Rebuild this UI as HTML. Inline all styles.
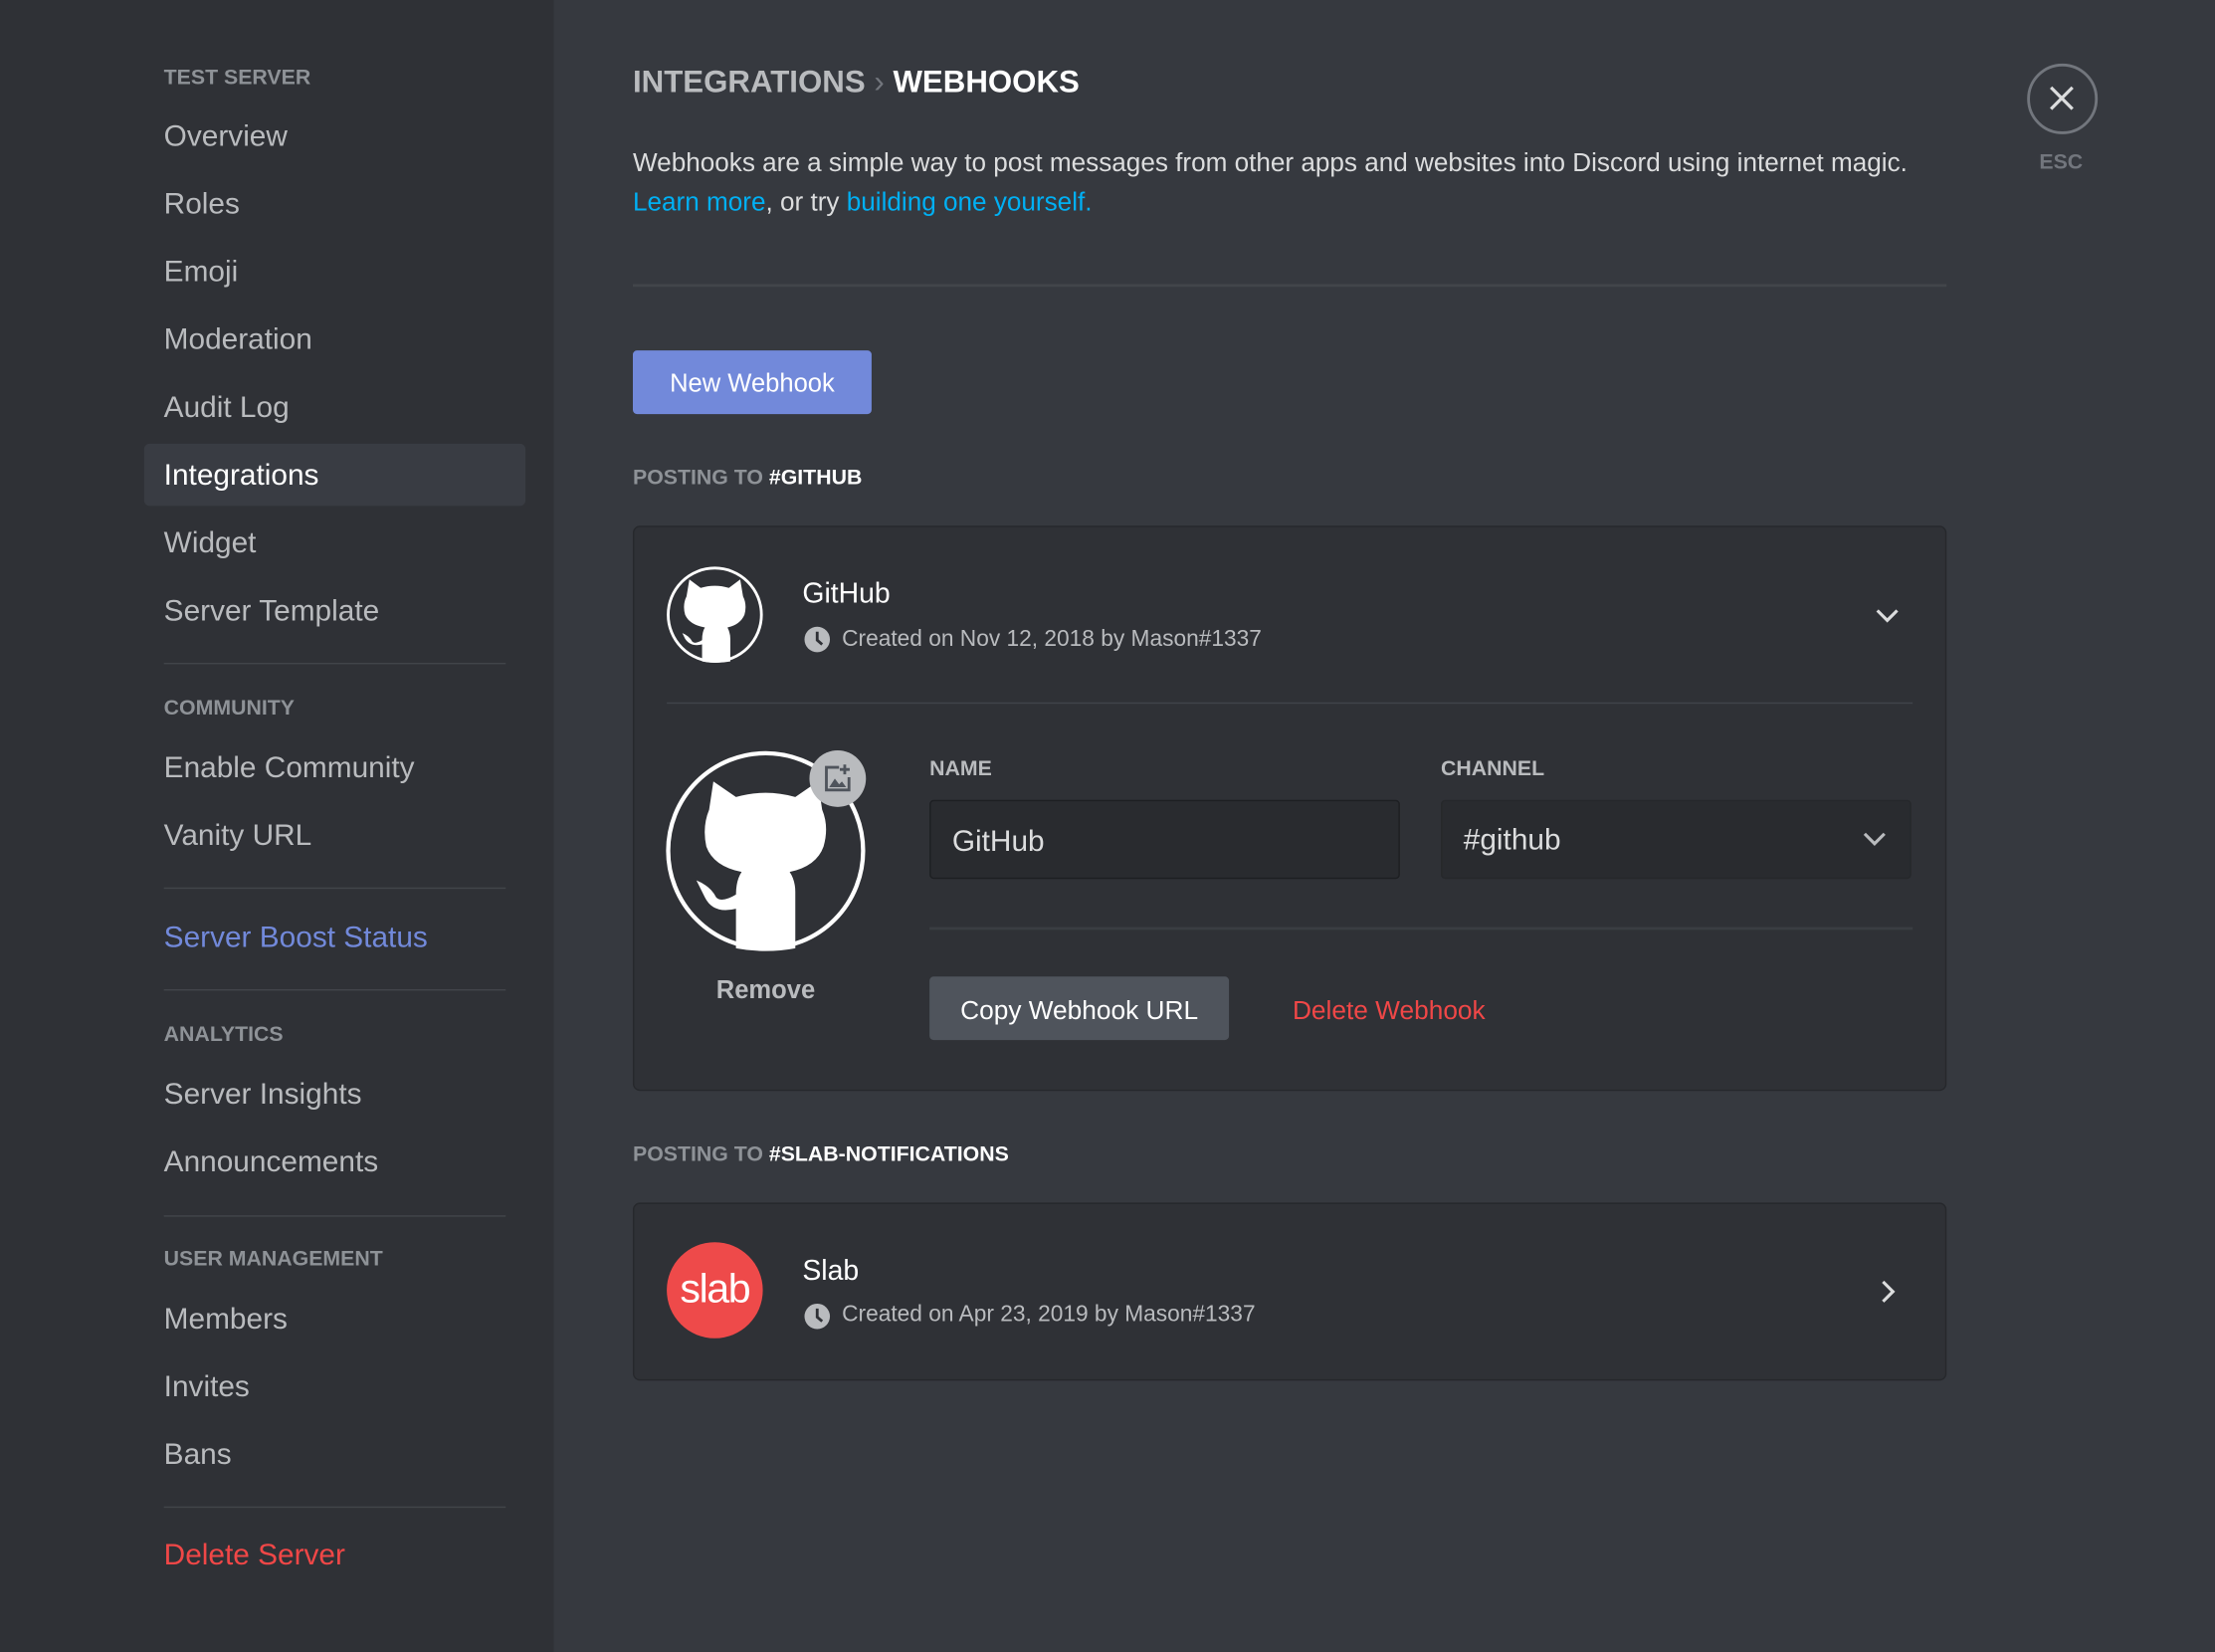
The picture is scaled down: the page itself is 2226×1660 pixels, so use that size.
<!DOCTYPE html>
<html><head><meta charset="utf-8"><style>
html,body{margin:0;padding:0;width:2226px;height:1660px;overflow:hidden;background:#36393f}
#w{position:absolute;left:0;top:0;width:1568px;height:1169px;transform:scale(1.41964,1.42001);transform-origin:0 0;font-family:"Liberation Sans",sans-serif;background:#36393f}
.a{position:absolute;white-space:nowrap}
#side{position:absolute;left:0;top:0;width:392px;height:1169px;background:#2f3136}
.h{font-size:15px;font-weight:bold;color:#8e9297;left:116px;transform:translateY(-50%);margin-top:1px}
.i{font-size:21px;color:#b9bbbe;left:116px;transform:translateY(-50%);margin-top:1px}
.sep{position:absolute;left:116px;width:242px;height:1px;background:#42454a}
.lbl{font-size:15px;font-weight:bold;color:#b9bbbe;transform:translateY(-50%);margin-top:1px}
.card{position:absolute;left:448px;width:928px;background:#2f3136;border:1px solid #26282c;border-radius:5px}
.meta{font-size:16px;color:#b9bbbe;transform:translateY(-50%);margin-top:1px}
</style></head><body><div id="w">
<div id="side">
<div class="a h" style="top:54px">TEST SERVER</div>
<div class="a i" style="top:96px">Overview</div>
<div class="a i" style="top:144px">Roles</div>
<div class="a i" style="top:192px">Emoji</div>
<div class="a i" style="top:240px">Moderation</div>
<div class="a i" style="top:288px">Audit Log</div>
<div style="position:absolute;left:102px;top:314px;width:270px;height:44px;background:#393c43;border-radius:4px"></div>
<div class="a i" style="top:336px;color:#fff">Integrations</div>
<div class="a i" style="top:384px">Widget</div>
<div class="a i" style="top:432px">Server Template</div>
<div class="sep" style="top:469px"></div>
<div class="a h" style="top:500px">COMMUNITY</div>
<div class="a i" style="top:543px">Enable Community</div>
<div class="a i" style="top:591px">Vanity URL</div>
<div class="sep" style="top:628px"></div>
<div class="a i" style="top:663px;color:#7289da">Server Boost Status</div>
<div class="sep" style="top:700px"></div>
<div class="a h" style="top:731px">ANALYTICS</div>
<div class="a i" style="top:774px">Server Insights</div>
<div class="a i" style="top:822px">Announcements</div>
<div class="sep" style="top:860px"></div>
<div class="a h" style="top:890px">USER MANAGEMENT</div>
<div class="a i" style="top:933px">Members</div>
<div class="a i" style="top:981px">Invites</div>
<div class="a i" style="top:1029px">Bans</div>
<div class="sep" style="top:1066px"></div>
<div class="a i" style="top:1100px;color:#f04747">Delete Server</div>
</div>

<div class="a" style="left:448px;top:58px;transform:translateY(-50%);font-size:22px;font-weight:bold;color:#b9bbbe">INTEGRATIONS <span style="color:#72767d;font-weight:normal">›</span> <span style="color:#fff">WEBHOOKS</span></div>
<div class="a" style="left:448px;top:115px;transform:translateY(-50%);font-size:18.4px;color:#dcddde">Webhooks are a simple way to post messages from other apps and websites into Discord using internet magic.</div>
<div class="a" style="left:448px;top:143px;transform:translateY(-50%);font-size:18.4px;color:#dcddde"><span style="color:#00b0f4">Learn more</span>, or try <span style="color:#00b0f4">building one yourself.</span></div>
<div style="position:absolute;left:448px;top:201px;width:930px;height:2px;background:#42454a"></div>
<div style="position:absolute;left:448px;top:248px;width:169px;height:45px;background:#7289da;border-radius:3px;color:#fff;font-size:18px;line-height:47px;text-align:center">New Webhook</div>
<div class="a lbl" style="left:448px;top:337px;color:#8e9297">POSTING TO <span style="color:#fff">#GITHUB</span></div>

<div style="position:absolute;left:1435px;top:45px;width:46px;height:46px;border:2px solid #72767d;border-radius:50%"></div>
<svg class="a" style="left:1450px;top:60px" width="19" height="19" viewBox="0 0 20 20"><path d="M2 2L18 18M18 2L2 18" stroke="#dcddde" stroke-width="2.4"/></svg>
<div class="a" style="left:1459px;top:115px;transform:translate(-50%,-50%);font-size:15px;font-weight:bold;color:#72767d">ESC</div>

<div class="card" style="top:372px;height:398px"></div>
<svg class="a" style="left:471px;top:400px" width="70" height="70" viewBox="0 0 70 70"><circle cx="35" cy="35" r="33" fill="#2f3136" stroke="#fff" stroke-width="2"/><path d="M15 22L17 10L25 16Q35 13 45 16L53 10L55 22Q58 28 56 35Q53 42 44 44Q46 48 46 52L46 68Q35 70 26 68L26 56Q18 58 14 52L12 48Q17 50 19 54Q21 56 26 53Q26 47 28 44Q17 42 14 35Q12 28 15 22Z" fill="#fff"/></svg>
<div class="a" style="left:568px;top:421px;transform:translateY(-50%);font-size:20px;color:#fff">GitHub</div>
<svg class="a" style="left:569px;top:443px" width="19" height="19" viewBox="0 0 19 19"><circle cx="9.5" cy="9.5" r="9" fill="#b9bbbe"/><path d="M9.5 4V10L13 13" stroke="#2f3136" stroke-width="2" fill="none"/></svg>
<div class="a meta" style="left:596px;top:452px">Created on Nov 12, 2018 by Mason#1337</div>
<svg class="a" style="left:1327px;top:429px" width="18" height="14" viewBox="0 0 18 14"><path d="M2 3L9 10L16 3" stroke="#dcddde" stroke-width="2.2" fill="none"/></svg>
<div style="position:absolute;left:472px;top:497px;width:882px;height:1px;background:#40444b"></div>

<svg class="a" style="left:471px;top:531px" width="144" height="144" viewBox="0 0 144 144"><circle cx="71" cy="71" r="69" fill="#2f3136" stroke="#fff" stroke-width="3"/><path d="M31 42L34 22L50 33Q71 27 92 33L108 22L111 42Q116 54 112 68Q107 82 88 86Q92 92 92 100L92 140Q71 144 50 140L50 112Q34 116 28 104L22 92Q32 96 36 104Q40 108 50 102Q50 92 54 86Q34 82 29 68Q26 54 31 42Z" fill="#fff"/></svg>
<div style="position:absolute;left:573px;top:531px;width:40px;height:40px;border-radius:50%;background:#b9bbbe"></div>
<svg class="a" style="left:582px;top:540px" width="22" height="22" viewBox="0 0 22 22"><path d="M12 3H3V19H19V10" stroke="#4f545c" stroke-width="2" fill="none"/><path d="M16 1V8M12.5 4.5H19.5" stroke="#4f545c" stroke-width="2"/><path d="M5 17L9 11L12 15L14 13L17 17Z" fill="#4f545c"/></svg>
<div class="a" style="left:542px;top:701px;transform:translate(-50%,-50%);font-size:18px;font-weight:bold;color:#b9bbbe">Remove</div>

<div class="a lbl" style="left:658px;top:543px">NAME</div>
<div class="a lbl" style="left:1020px;top:543px">CHANNEL</div>
<div style="position:absolute;left:658px;top:566px;width:331px;height:54px;background:#292b2f;border:1px solid #1d1f22;border-radius:3px"></div>
<div class="a" style="left:674px;top:596px;transform:translateY(-50%);font-size:21px;color:#dcddde">GitHub</div>
<div style="position:absolute;left:1020px;top:566px;width:331px;height:54px;background:#292b2f;border:1px solid #26282b;border-radius:3px"></div>
<div class="a" style="left:1036px;top:595px;transform:translateY(-50%);font-size:21px;color:#dcddde">#github</div>
<svg class="a" style="left:1318px;top:587px" width="18" height="14" viewBox="0 0 18 14"><path d="M2 3L9 10L16 3" stroke="#b9bbbe" stroke-width="2.2" fill="none"/></svg>
<div style="position:absolute;left:658px;top:656px;width:696px;height:2px;background:#3a3d42"></div>
<div style="position:absolute;left:658px;top:691px;width:212px;height:45px;background:#4f545c;border-radius:3px;color:#fff;font-size:18.5px;line-height:47px;text-align:center">Copy Webhook URL</div>
<div class="a" style="left:915px;top:715px;transform:translateY(-50%);font-size:18.5px;color:#f04747">Delete Webhook</div>

<div class="a lbl" style="left:448px;top:816px;color:#8e9297">POSTING TO <span style="color:#fff">#SLAB-NOTIFICATIONS</span></div>
<div class="card" style="top:851px;height:124px"></div>
<div style="position:absolute;left:472px;top:879px;width:68px;height:68px;border-radius:50%;background:#ee4a4a"></div>
<div class="a" style="left:506px;top:913px;transform:translate(-50%,-50%);font-size:29px;color:#fff;letter-spacing:-1px">slab</div>
<div class="a" style="left:568px;top:900px;transform:translateY(-50%);font-size:20px;color:#fff">Slab</div>
<svg class="a" style="left:569px;top:922px" width="19" height="19" viewBox="0 0 19 19"><circle cx="9.5" cy="9.5" r="9" fill="#b9bbbe"/><path d="M9.5 4V10L13 13" stroke="#2f3136" stroke-width="2" fill="none"/></svg>
<div class="a meta" style="left:596px;top:930px">Created on Apr 23, 2019 by Mason#1337</div>
<svg class="a" style="left:1330px;top:905px" width="14" height="18" viewBox="0 0 14 18"><path d="M3 2L10 9L3 16" stroke="#dcddde" stroke-width="2.2" fill="none"/></svg>
</div></body></html>
